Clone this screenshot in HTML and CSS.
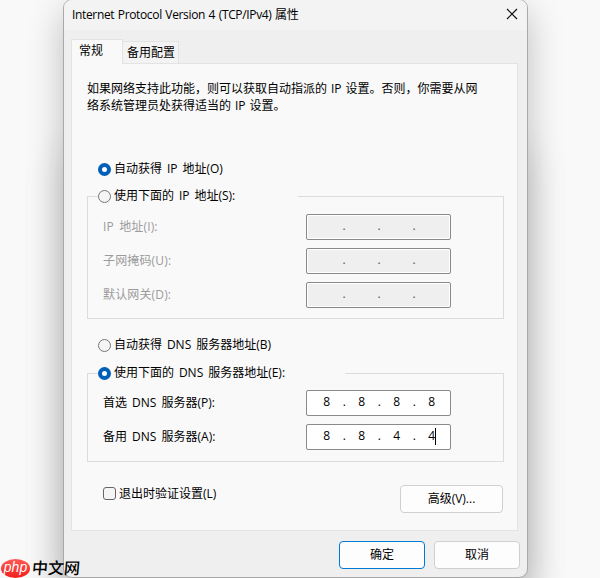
FILE: index.html
```html
<!DOCTYPE html>
<html lang="zh-CN">
<head>
<meta charset="utf-8">
<title>Internet Protocol Version 4 (TCP/IPv4) 属性</title>
<link rel="stylesheet" href="styles.css">
</head>
<body>
<main class="dialog">
  <header class="titlebar">
    <h1 class="title">Internet Protocol Version 4 (TCP/IPv4) 属性</h1>
    <svg class="close" width="12" height="12" viewBox="0 0 12 12"><path d="M1 1L11 11M11 1L1 11" fill="none" stroke="#111" stroke-width="1.2"/></svg>
  </header>
  <nav class="tabs">
    <div class="tab active">常规</div>
    <div class="tab">备用配置</div>
  </nav>
  <section class="panel">
    <p class="intro">如果网络支持此功能，则可以获取自动指派的 IP 设置。否则，你需要从网<br>络系统管理员处获得适当的 IP 设置。</p>
    <div class="option"><i class="radio on"></i><span>自动获得 IP 地址(O)</span></div>
    <div class="group ip">
      <div class="option legend"><i class="radio"></i><span>使用下面的 IP 地址(S):</span></div>
      <div class="row disabled"><span>IP 地址(I):</span><div class="field"><b></b><b>.</b><b></b><b>.</b><b></b><b>.</b><b></b></div></div>
      <div class="row disabled"><span>子网掩码(U):</span><div class="field"><b></b><b>.</b><b></b><b>.</b><b></b><b>.</b><b></b></div></div>
      <div class="row disabled"><span>默认网关(D):</span><div class="field"><b></b><b>.</b><b></b><b>.</b><b></b><b>.</b><b></b></div></div>
    </div>
    <div class="option auto-dns"><i class="radio"></i><span>自动获得 DNS 服务器地址(B)</span></div>
    <div class="group dns">
      <div class="option legend"><i class="radio on"></i><span>使用下面的 DNS 服务器地址(E):</span></div>
      <div class="row"><span>首选 DNS 服务器(P):</span><div class="field"><b>8</b><b>.</b><b>8</b><b>.</b><b>8</b><b>.</b><b>8</b></div></div>
      <div class="row"><span>备用 DNS 服务器(A):</span><div class="field"><b>8</b><b>.</b><b>8</b><b>.</b><b>4</b><b>.</b><b class="caret">4</b></div></div>
    </div>
    <div class="bottom">
      <div class="verify"><i class="check"></i><span>退出时验证设置(L)</span></div>
      <div class="button advanced">高级(V)...</div>
    </div>
  </section>
  <footer class="actions">
    <div class="button primary">确定</div>
    <div class="button">取消</div>
  </footer>
</main>
<div class="watermark"><span class="php">php</span><span class="cn">中文网</span></div>
</body>
</html>
```
FILE: styles.css
```css
* { box-sizing: border-box; }
body {
  margin: 0;
  height: 578px;
  overflow: hidden;
  background: #f9f9f9;
  color: #000;
  font: 12px/18px "Open Sans", "Noto Sans CJK SC", sans-serif;
  white-space: nowrap;
}
.dialog {
  width: 465px;
  height: 579px;
  margin: -1px 0 0 63px;
  border: 1px solid #a9a9a9;
  border-radius: 9px;
  background: #efefef;
  box-shadow: 0 12px 36px rgba(0, 0, 0, .24), 0 150px 40px rgba(0, 0, 0, .15);
  overflow: hidden;
}
.titlebar {
  display: flex;
  justify-content: space-between;
  align-items: center;
  height: 30px;
  padding: 0 9px 0 8px;
  background: #f3f3f3;
}
.title { margin: 0; font-size: 12px; font-weight: 400; letter-spacing: -.35px; word-spacing: .8px; }
.close { margin-top: -2px; }
.tabs { display: flex; align-items: flex-end; height: 33px; padding-left: 7px; }
.tab {
  width: 56px;
  height: 22px;
  padding-left: 4px;
  border: 1px solid #e3e3e3;
  border-left: 0;
  border-bottom: 0;
  background: #f3f3f3;
  line-height: 21px;
}
.tab.active {
  position: relative;
  width: 52px;
  height: 25px;
  margin-bottom: -1px;
  padding-left: 7px;
  border-left: 1px solid #e3e3e3;
  background: #f9f9f9;
}
.panel {
  width: 447px;
  height: 468px;
  margin-left: 7px;
  padding: 16px 14px 0 15px;
  border: 1px solid #e3e3e3;
  background: #f9f9f9;
}
.intro { height: 80px; margin: 0; line-height: 17px; word-spacing: .8px; margin-left: -1px; padding-left: 1px; }
.option { display: flex; gap: 3px; height: 18px; margin-left: 11px; line-height: 17px; word-spacing: 1.8px; }
.radio {
  width: 13px;
  height: 13px;
  margin-top: 3px;
  border: 1px solid #767676;
  border-radius: 50%;
  background: #f5f5f5;
}
.radio.on { border: 4px solid #005fb8; background: #fff; }
.group { width: 417px; border: 1px solid #dcdcdc; }
.ip { height: 123px; margin-top: 18px; }
.dns { height: 89px; margin-top: 19px; }
.auto-dns { margin-top: 17px; }
.legend { width: 200px; margin: -10px 0 9px 10px; background: #f9f9f9; }
.dns .legend { width: 247px; margin-bottom: 8px; }
.row {
  display: flex;
  align-items: center;
  justify-content: space-between;
  height: 26px;
  margin: 0 52px 8px 15px;
  word-spacing: 2px;
}
.field {
  display: grid;
  grid-template-columns: repeat(7, 17.5px);
  width: 145px;
  height: 26px;
  padding-left: 11px;
  border: 1px solid #8a8a8a;
  border-radius: 2px;
  background: #fff;
  text-align: center;
  line-height: 22px;
}
.field b { font-weight: 400; }
.disabled { color: #9b9b9b; letter-spacing: .15px; }
.disabled .field { background: #efefef; box-shadow: inset 0 0 0 1px #fff; color: #555; }
.caret { background: linear-gradient(#000, #000) 12px 3px / 1px 17px no-repeat; }
.bottom { display: flex; justify-content: space-between; margin-top: 23px; }
.verify { display: flex; gap: 3px; margin-left: 16px; }
.check { width: 13px; height: 13px; margin-top: 2px; border: 1px solid #666; border-radius: 3px; background: #f5f5f5; }
.button {
  width: 86px;
  height: 28px;
  border: 1px solid #d0d0d0;
  border-radius: 4px;
  background: #fdfdfd;
  text-align: center;
  line-height: 26px;
}
.advanced { width: 103px; }
.primary { border-color: #0078d4; }
.actions { display: flex; justify-content: flex-end; gap: 9px; padding: 10px 7px 0 0; }
.watermark { position: absolute; left: 1px; top: 557px; display: flex; align-items: center; height: 21px; }
.php {
  width: 29px;
  height: 19px;
  margin-top: 2px;
  border-radius: 50%;
  background: linear-gradient(#ff5a52, #ef2020);
  color: #fff;
  font: italic 14px/16px "Liberation Sans", sans-serif;
  text-align: center;
}
.cn { margin-left: 2px; font: 500 16px/20px "Noto Sans CJK SC", sans-serif; transform: translateY(-1px) skewX(-5deg); }
```
